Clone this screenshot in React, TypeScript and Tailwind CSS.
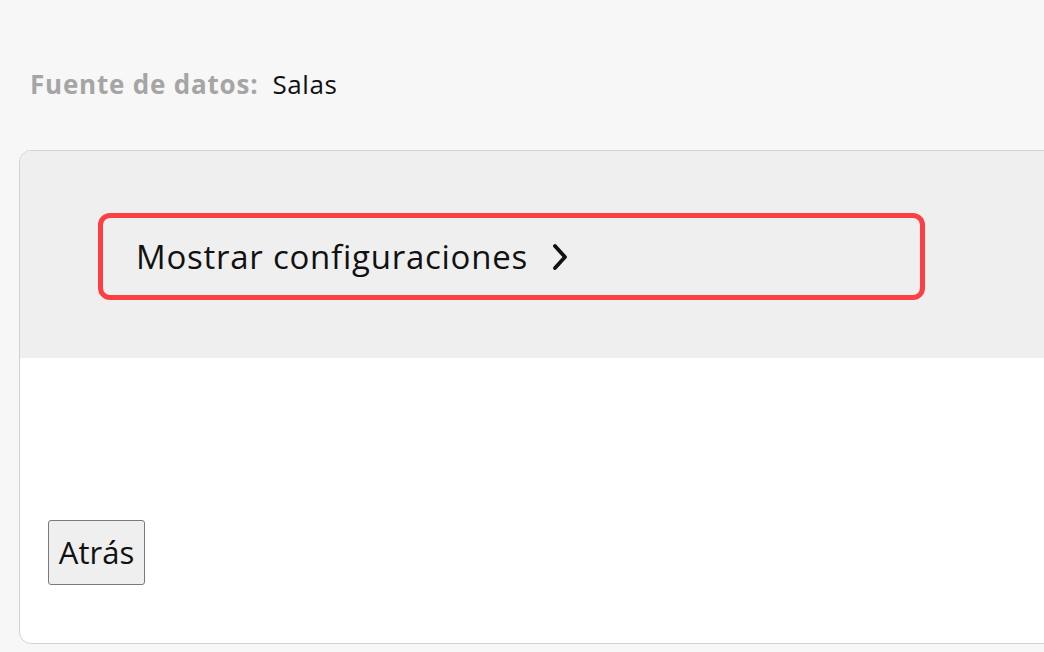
import React from 'react';

const ChevronRight = () => (
    <svg width="20" height="28" viewBox="0 0 20 28" fill="none" stroke="#111" strokeWidth={3.8} strokeLinecap="round" strokeLinejoin="round">
        <path d="M5 3l10 11-10 11" />
    </svg>
);

export default function App() {
    return (
        <div className="w-[1044px] h-[652px] overflow-hidden bg-[#f7f7f7]" style={{ fontFamily: '"Open Sans", "Liberation Sans", sans-serif' }}>
            <div className="pt-[66px] pl-[30px] flex items-baseline gap-[14px] text-[26px] leading-[36px]">
                <span className="font-bold text-[#a5a5a5] tracking-[0.8px]">Fuente de datos:</span>
                <span className="text-[#111] tracking-[0.6px]">Salas</span>
            </div>

            <div className="mt-[48px] ml-[19px] w-[1060px] h-[494px] border border-[#d2d2d2] rounded-[12px] overflow-hidden bg-white flex flex-col">
                <div className="h-[207px] bg-[#efefef] pt-[62px] pl-[78px]">
                    <button className="w-[827px] h-[87px] border-[5px] border-[#fb3f42] rounded-[12px] flex items-center pl-[33px] gap-[22px] text-[33px] tracking-[0.75px] text-[#111]">
                        <span>Mostrar configuraciones</span>
                        <ChevronRight />
                    </button>
                </div>
                <div className="pt-[162px] pl-[28px]">
                    <button className="w-[97px] h-[65px] border border-[#7a7a7a] rounded-[3px] bg-[#efefef] text-[31px] text-[#111] flex items-center justify-center">
                        Atrás
                    </button>
                </div>
            </div>
        </div>
    );
}
